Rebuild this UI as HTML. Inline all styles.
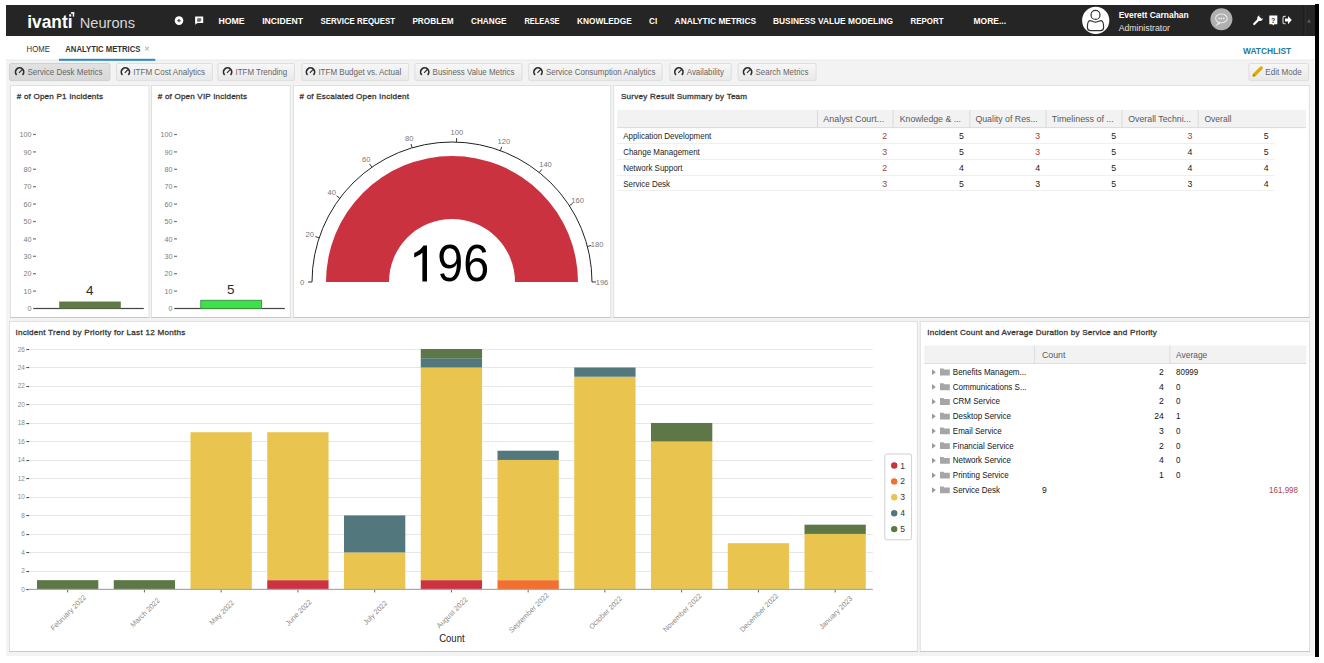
<!DOCTYPE html>
<html><head><meta charset="utf-8"><title>Analytic Metrics</title>
<style>
html,body{margin:0;padding:0;background:#fff;}
body{width:1324px;height:663px;overflow:hidden;font-family:"Liberation Sans", sans-serif;}
svg{display:block;}
text{font-family:"Liberation Sans", sans-serif;}
</style></head><body>
<svg width="1324" height="663" viewBox="0 0 1324 663">
<rect x="6" y="36" width="1308" height="24" fill="#ffffff" />
<rect x="6" y="60" width="1308" height="596" fill="#f3f3f3" />
<rect x="6" y="59.5" width="1308" height="1" fill="#e9e9e9" />
<rect x="6" y="5" width="1309" height="31" fill="#252525" />
<rect x="1315" y="4" width="4" height="653" fill="#000" />
<text x="27.3" y="27.9" font-size="18.3" fill="#fff" font-weight="bold" textLength="45.2" lengthAdjust="spacingAndGlyphs" >ivantı</text>
<rect x="70.9" y="12.2" width="3.3" height="1.5" fill="#fff"/><rect x="72.7" y="12.2" width="1.5" height="4.4" fill="#fff"/><rect x="69.2" y="14.3" width="2" height="2.3" fill="#fff"/>
<text x="79.7" y="27.7" font-size="14.6" fill="#d6d6d6" textLength="55.4" lengthAdjust="spacingAndGlyphs" >Neurons</text>
<circle cx="179" cy="20.6" r="4.3" fill="#fff"/><path d="M177.3 20.6h3.4M179 18.9v3.4" stroke="#555" stroke-width="1.3"/>
<path d="M195.1 16.5h8.1v6.5h-5.6l-2.3 1.8v-1.8h-0.2z" fill="#fff"/><path d="M197.2 18.3h4v2.3l-1.2 1.2h-2.8z" fill="#6a6a6a"/>
<text x="218.5" y="24" font-size="9" fill="#fff" font-weight="bold" textLength="26.2" lengthAdjust="spacingAndGlyphs" >HOME</text>
<text x="262.2" y="24" font-size="9" fill="#fff" font-weight="bold" textLength="40.8" lengthAdjust="spacingAndGlyphs" >INCIDENT</text>
<text x="320.5" y="24" font-size="9" fill="#fff" font-weight="bold" textLength="74.5" lengthAdjust="spacingAndGlyphs" >SERVICE REQUEST</text>
<text x="412.4" y="24" font-size="9" fill="#fff" font-weight="bold" textLength="41.1" lengthAdjust="spacingAndGlyphs" >PROBLEM</text>
<text x="471" y="24" font-size="9" fill="#fff" font-weight="bold" textLength="35.5" lengthAdjust="spacingAndGlyphs" >CHANGE</text>
<text x="524.4" y="24" font-size="9" fill="#fff" font-weight="bold" textLength="35.2" lengthAdjust="spacingAndGlyphs" >RELEASE</text>
<text x="577" y="24" font-size="9" fill="#fff" font-weight="bold" textLength="54.7" lengthAdjust="spacingAndGlyphs" >KNOWLEDGE</text>
<text x="649" y="24" font-size="9" fill="#fff" font-weight="bold" textLength="8.2" lengthAdjust="spacingAndGlyphs" >CI</text>
<text x="674.6" y="24" font-size="9" fill="#fff" font-weight="bold" textLength="81.4" lengthAdjust="spacingAndGlyphs" >ANALYTIC METRICS</text>
<text x="773" y="24" font-size="9" fill="#fff" font-weight="bold" textLength="120" lengthAdjust="spacingAndGlyphs" >BUSINESS VALUE MODELING</text>
<text x="910.5" y="24" font-size="9" fill="#fff" font-weight="bold" textLength="33.0" lengthAdjust="spacingAndGlyphs" >REPORT</text>
<text x="973.5" y="24" font-size="9" fill="#fff" font-weight="bold" textLength="32.5" lengthAdjust="spacingAndGlyphs" >MORE...</text>
<circle cx="1095.7" cy="20.4" r="13.6" fill="#fff"/>
<circle cx="1095.5" cy="14.9" r="4.5" fill="none" stroke="#333" stroke-width="1.2"/>
<path d="M1095.5 22.2C1093.5 22.2 1091.5 20.6 1090 20.6C1088.2 20.6 1087.4 24 1087.4 27.6C1087.4 29.6 1088.4 30.6 1090.4 30.6H1100.6C1102.6 30.6 1103.6 29.6 1103.6 27.6C1103.6 24 1102.8 20.6 1101 20.6C1099.5 20.6 1097.5 22.2 1095.5 22.2Z" fill="none" stroke="#333" stroke-width="1.2"/>
<text x="1118.7" y="17.9" font-size="8.5" fill="#fff" font-weight="bold" textLength="70" lengthAdjust="spacingAndGlyphs" >Everett Carnahan</text>
<text x="1118.7" y="31" font-size="8.5" fill="#e0e0e0" textLength="51.3" lengthAdjust="spacingAndGlyphs" >Administrator</text>
<circle cx="1221.4" cy="19.2" r="11" fill="#b0b0b0"/>
<ellipse cx="1221.4" cy="18.4" rx="5.8" ry="4.4" fill="none" stroke="#e8e8e8" stroke-width="1.1"/><path d="M1218.6 22.2l-1.6 2.6 3.2-1.8" fill="none" stroke="#e8e8e8" stroke-width="1.1"/>
<circle cx="1219.1" cy="18.4" r="0.9" fill="#ececec"/><circle cx="1221.4" cy="18.4" r="0.9" fill="#ececec"/><circle cx="1223.7" cy="18.4" r="0.9" fill="#ececec"/>
<path d="M1254.2 24l5.4-5.4" stroke="#fff" stroke-width="2.2" stroke-linecap="round"/><circle cx="1260" cy="18.2" r="2.7" fill="#fff"/><path d="M1260.6 14.6l2.8 2.8-1.6 1.6-2.8-2.8z" fill="#252525"/>
<path d="M1269.3 15.6h8v8.6h-3l-1 1.2-1-1.2h-3z" fill="#fff"/>
<text x="1273.1" y="22.6" font-size="7" fill="#333" font-weight="bold" text-anchor="middle" >?</text>
<path d="M1285.6 16.4h-1.2c-0.8 0-1.4 0.6-1.4 1.4v4.6c0 0.8 0.6 1.4 1.4 1.4h1.2" fill="none" stroke="#d8d8d8" stroke-width="1.1"/><path d="M1285 18.6h3v-2.6l3.8 4.1-3.8 4.1v-2.6h-3z" fill="#fff"/>
<rect x="1303.6" y="5" width="1" height="31" fill="#151515" />
<rect x="1304.6" y="5" width="0.8" height="31" fill="#3a3a3a" />
<path d="M1306.8 22.6l2.2-3.6 2.2 3.6z" fill="#5a5a5a"/>
<text x="26.6" y="52" font-size="8.6" fill="#333" textLength="23.2" lengthAdjust="spacingAndGlyphs" >HOME</text>
<text x="65.3" y="52" font-size="8.6" fill="#333" font-weight="bold" textLength="75.2" lengthAdjust="spacingAndGlyphs" >ANALYTIC METRICS</text>
<path d="M145.2 46.8l3.6 3.6M148.8 46.8l-3.6 3.6" stroke="#bdbdbd" stroke-width="1.1"/>
<rect x="59" y="58.8" width="96.3" height="2" fill="#2a8ac0" />
<text x="1243" y="54.3" font-size="8.7" fill="#2379a0" font-weight="bold" textLength="48.2" lengthAdjust="spacingAndGlyphs" >WATCHLIST</text>
<defs><linearGradient id="bg1" x1="0" y1="0" x2="0" y2="1"><stop offset="0" stop-color="#f7f7f7"/><stop offset="1" stop-color="#e9e9e9"/></linearGradient><linearGradient id="bg2" x1="0" y1="0" x2="0" y2="1"><stop offset="0" stop-color="#e2e2e2"/><stop offset="1" stop-color="#d8d8d8"/></linearGradient></defs>
<rect x="9.6" y="63.5" width="100.3" height="17.1" rx="1.5" fill="url(#bg2)" stroke="#d0d0d0" stroke-width="1"/>
<path d="M16.70 74.90A4.1 4.1 0 1 1 22.50 74.90" fill="none" stroke="#2d2d2d" stroke-width="1.7"/><path d="M19.00 72.90L22.10 69.70" stroke="#2d2d2d" stroke-width="1.2"/>
<text x="27.5" y="74.6" font-size="8.7" fill="#666" textLength="75.1" lengthAdjust="spacingAndGlyphs" >Service Desk Metrics</text>
<rect x="116.5" y="63.5" width="95.8" height="17.1" rx="1.5" fill="url(#bg1)" stroke="#dedede" stroke-width="1"/>
<path d="M122.50 74.90A4.1 4.1 0 1 1 128.30 74.90" fill="none" stroke="#2d2d2d" stroke-width="1.7"/><path d="M124.80 72.90L127.90 69.70" stroke="#2d2d2d" stroke-width="1.2"/>
<text x="133.3" y="74.6" font-size="8.7" fill="#666" textLength="71.8" lengthAdjust="spacingAndGlyphs" >ITFM Cost Analytics</text>
<rect x="217.8" y="63.5" width="76.7" height="17.1" rx="1.5" fill="url(#bg1)" stroke="#dedede" stroke-width="1"/>
<path d="M224.70 74.90A4.1 4.1 0 1 1 230.50 74.90" fill="none" stroke="#2d2d2d" stroke-width="1.7"/><path d="M227.00 72.90L230.10 69.70" stroke="#2d2d2d" stroke-width="1.2"/>
<text x="235.5" y="74.6" font-size="8.7" fill="#666" textLength="51.7" lengthAdjust="spacingAndGlyphs" >ITFM Trending</text>
<rect x="301.8" y="63.5" width="106.9" height="17.1" rx="1.5" fill="url(#bg1)" stroke="#dedede" stroke-width="1"/>
<path d="M307.60 74.90A4.1 4.1 0 1 1 313.40 74.90" fill="none" stroke="#2d2d2d" stroke-width="1.7"/><path d="M309.90 72.90L313.00 69.70" stroke="#2d2d2d" stroke-width="1.2"/>
<text x="318.40000000000003" y="74.6" font-size="8.7" fill="#666" textLength="82.8" lengthAdjust="spacingAndGlyphs" >ITFM Budget vs. Actual</text>
<rect x="414.8" y="63.5" width="107.2" height="17.1" rx="1.5" fill="url(#bg1)" stroke="#dedede" stroke-width="1"/>
<path d="M421.80 74.90A4.1 4.1 0 1 1 427.60 74.90" fill="none" stroke="#2d2d2d" stroke-width="1.7"/><path d="M424.10 72.90L427.20 69.70" stroke="#2d2d2d" stroke-width="1.2"/>
<text x="432.6" y="74.6" font-size="8.7" fill="#666" textLength="81.9" lengthAdjust="spacingAndGlyphs" >Business Value Metrics</text>
<rect x="528.7" y="63.5" width="133.3" height="17.1" rx="1.5" fill="url(#bg1)" stroke="#dedede" stroke-width="1"/>
<path d="M535.10 74.90A4.1 4.1 0 1 1 540.90 74.90" fill="none" stroke="#2d2d2d" stroke-width="1.7"/><path d="M537.40 72.90L540.50 69.70" stroke="#2d2d2d" stroke-width="1.2"/>
<text x="545.9" y="74.6" font-size="8.7" fill="#666" textLength="109.6" lengthAdjust="spacingAndGlyphs" >Service Consumption Analytics</text>
<rect x="669.8" y="63.5" width="61.4" height="17.1" rx="1.5" fill="url(#bg1)" stroke="#dedede" stroke-width="1"/>
<path d="M676.00 74.90A4.1 4.1 0 1 1 681.80 74.90" fill="none" stroke="#2d2d2d" stroke-width="1.7"/><path d="M678.30 72.90L681.40 69.70" stroke="#2d2d2d" stroke-width="1.2"/>
<text x="686.8" y="74.6" font-size="8.7" fill="#666" textLength="37.1" lengthAdjust="spacingAndGlyphs" >Availability</text>
<rect x="738.1" y="63.5" width="78.0" height="17.1" rx="1.5" fill="url(#bg1)" stroke="#dedede" stroke-width="1"/>
<path d="M744.70 74.90A4.1 4.1 0 1 1 750.50 74.90" fill="none" stroke="#2d2d2d" stroke-width="1.7"/><path d="M747.00 72.90L750.10 69.70" stroke="#2d2d2d" stroke-width="1.2"/>
<text x="755.5" y="74.6" font-size="8.7" fill="#666" textLength="53.0" lengthAdjust="spacingAndGlyphs" >Search Metrics</text>
<rect x="1248.9" y="63.5" width="59.5" height="17.1" rx="1.5" fill="url(#bg1)" stroke="#dedede"/>
<path d="M1254 75.2L1261.2 68" stroke="#dcaa10" stroke-width="3.3" stroke-linecap="round"/><path d="M1253 76.4l0.6-2.2 1.6 1.6z" fill="#a07a10"/>
<text x="1265.3" y="74.6" font-size="8.7" fill="#666" textLength="36.4" lengthAdjust="spacingAndGlyphs" >Edit Mode</text>
<rect x="10.5" y="85.5" width="138.5" height="232" fill="#fff" stroke="#e0e0e0" stroke-width="1"/>
<rect x="10" y="317" width="139.5" height="1" fill="#c9c9c9"/>
<rect x="151.5" y="85.5" width="138.8" height="232" fill="#fff" stroke="#e0e0e0" stroke-width="1"/>
<rect x="151" y="317" width="139.8" height="1" fill="#c9c9c9"/>
<rect x="293.5" y="85.5" width="317.2" height="232" fill="#fff" stroke="#e0e0e0" stroke-width="1"/>
<rect x="293" y="317" width="318.2" height="1" fill="#c9c9c9"/>
<rect x="613.7" y="85.5" width="695.6" height="232" fill="#fff" stroke="#e0e0e0" stroke-width="1"/>
<rect x="613.2" y="317" width="696.6" height="1" fill="#c9c9c9"/>
<rect x="9.5" y="321.5" width="907.8" height="330" fill="#fff" stroke="#e0e0e0" stroke-width="1"/>
<rect x="9" y="651" width="908.8" height="1" fill="#c9c9c9"/>
<rect x="920.3" y="321.5" width="389.2" height="330" fill="#fff" stroke="#e0e0e0" stroke-width="1"/>
<rect x="919.8" y="651" width="390.2" height="1" fill="#c9c9c9"/>
<text x="16.8" y="98.9" font-size="8.1" fill="#383838" stroke="#383838" stroke-width="0.3" textLength="86.2" lengthAdjust="spacing"># of Open P1 Incidents</text>
<text x="157.8" y="98.9" font-size="8.1" fill="#383838" stroke="#383838" stroke-width="0.3" textLength="89.2" lengthAdjust="spacing"># of Open VIP Incidents</text>
<text x="299.5" y="98.9" font-size="8.1" fill="#383838" stroke="#383838" stroke-width="0.3" textLength="109.4" lengthAdjust="spacing"># of Escalated Open Incident</text>
<text x="621" y="99" font-size="8.1" fill="#383838" stroke="#383838" stroke-width="0.3" textLength="126.1" lengthAdjust="spacing">Survey Result Summary by Team</text>
<text x="31.6" y="311.1" font-size="8" fill="#7c7c7c" text-anchor="end" textLength="4.0" lengthAdjust="spacingAndGlyphs" >0</text>
<text x="31.6" y="293.70000000000005" font-size="8" fill="#7c7c7c" text-anchor="end" textLength="8.01" lengthAdjust="spacingAndGlyphs" >10</text>
<rect x="33" y="290.50" width="3" height="1.2" fill="#777"/>
<text x="31.6" y="276.3" font-size="8" fill="#7c7c7c" text-anchor="end" textLength="8.01" lengthAdjust="spacingAndGlyphs" >20</text>
<rect x="33" y="273.10" width="3" height="1.2" fill="#777"/>
<text x="31.6" y="258.90000000000003" font-size="8" fill="#7c7c7c" text-anchor="end" textLength="8.01" lengthAdjust="spacingAndGlyphs" >30</text>
<rect x="33" y="255.70" width="3" height="1.2" fill="#777"/>
<text x="31.6" y="241.5" font-size="8" fill="#7c7c7c" text-anchor="end" textLength="8.01" lengthAdjust="spacingAndGlyphs" >40</text>
<rect x="33" y="238.30" width="3" height="1.2" fill="#777"/>
<text x="31.6" y="224.1" font-size="8" fill="#7c7c7c" text-anchor="end" textLength="8.01" lengthAdjust="spacingAndGlyphs" >50</text>
<rect x="33" y="220.90" width="3" height="1.2" fill="#777"/>
<text x="31.6" y="206.70000000000002" font-size="8" fill="#7c7c7c" text-anchor="end" textLength="8.01" lengthAdjust="spacingAndGlyphs" >60</text>
<rect x="33" y="203.50" width="3" height="1.2" fill="#777"/>
<text x="31.6" y="189.3" font-size="8" fill="#7c7c7c" text-anchor="end" textLength="8.01" lengthAdjust="spacingAndGlyphs" >70</text>
<rect x="33" y="186.10" width="3" height="1.2" fill="#777"/>
<text x="31.6" y="171.9" font-size="8" fill="#7c7c7c" text-anchor="end" textLength="8.01" lengthAdjust="spacingAndGlyphs" >80</text>
<rect x="33" y="168.70" width="3" height="1.2" fill="#777"/>
<text x="31.6" y="154.5" font-size="8" fill="#7c7c7c" text-anchor="end" textLength="8.01" lengthAdjust="spacingAndGlyphs" >90</text>
<rect x="33" y="151.30" width="3" height="1.2" fill="#777"/>
<text x="31.6" y="137.1" font-size="8" fill="#7c7c7c" text-anchor="end" textLength="12.01" lengthAdjust="spacingAndGlyphs" >100</text>
<rect x="33" y="133.90" width="3" height="1.2" fill="#777"/>
<rect x="33.3" y="307.9" width="110.5" height="1.2" fill="#444"/>
<rect x="59.2" y="301.54" width="61.6" height="6.96" fill="#5e7a46"/>
<text x="89.8" y="295.34000000000003" font-size="13.5" fill="#2a2a2a" text-anchor="middle" >4</text>
<text x="172.6" y="311.1" font-size="8" fill="#7c7c7c" text-anchor="end" textLength="4.0" lengthAdjust="spacingAndGlyphs" >0</text>
<text x="172.6" y="293.70000000000005" font-size="8" fill="#7c7c7c" text-anchor="end" textLength="8.01" lengthAdjust="spacingAndGlyphs" >10</text>
<rect x="174" y="290.50" width="3" height="1.2" fill="#777"/>
<text x="172.6" y="276.3" font-size="8" fill="#7c7c7c" text-anchor="end" textLength="8.01" lengthAdjust="spacingAndGlyphs" >20</text>
<rect x="174" y="273.10" width="3" height="1.2" fill="#777"/>
<text x="172.6" y="258.90000000000003" font-size="8" fill="#7c7c7c" text-anchor="end" textLength="8.01" lengthAdjust="spacingAndGlyphs" >30</text>
<rect x="174" y="255.70" width="3" height="1.2" fill="#777"/>
<text x="172.6" y="241.5" font-size="8" fill="#7c7c7c" text-anchor="end" textLength="8.01" lengthAdjust="spacingAndGlyphs" >40</text>
<rect x="174" y="238.30" width="3" height="1.2" fill="#777"/>
<text x="172.6" y="224.1" font-size="8" fill="#7c7c7c" text-anchor="end" textLength="8.01" lengthAdjust="spacingAndGlyphs" >50</text>
<rect x="174" y="220.90" width="3" height="1.2" fill="#777"/>
<text x="172.6" y="206.70000000000002" font-size="8" fill="#7c7c7c" text-anchor="end" textLength="8.01" lengthAdjust="spacingAndGlyphs" >60</text>
<rect x="174" y="203.50" width="3" height="1.2" fill="#777"/>
<text x="172.6" y="189.3" font-size="8" fill="#7c7c7c" text-anchor="end" textLength="8.01" lengthAdjust="spacingAndGlyphs" >70</text>
<rect x="174" y="186.10" width="3" height="1.2" fill="#777"/>
<text x="172.6" y="171.9" font-size="8" fill="#7c7c7c" text-anchor="end" textLength="8.01" lengthAdjust="spacingAndGlyphs" >80</text>
<rect x="174" y="168.70" width="3" height="1.2" fill="#777"/>
<text x="172.6" y="154.5" font-size="8" fill="#7c7c7c" text-anchor="end" textLength="8.01" lengthAdjust="spacingAndGlyphs" >90</text>
<rect x="174" y="151.30" width="3" height="1.2" fill="#777"/>
<text x="172.6" y="137.1" font-size="8" fill="#7c7c7c" text-anchor="end" textLength="12.01" lengthAdjust="spacingAndGlyphs" >100</text>
<rect x="174" y="133.90" width="3" height="1.2" fill="#777"/>
<rect x="174.3" y="307.9" width="110.5" height="1.2" fill="#444"/>
<rect x="200.8" y="300.30" width="60.8" height="8.20" fill="#3be24b" stroke="#3a8c3c" stroke-width="0.9"/>
<text x="230.8" y="293.6" font-size="13.5" fill="#2a2a2a" text-anchor="middle" >5</text>
<path d="M312 282A140 140 0 0 1 592 282" fill="none" stroke="#222" stroke-width="1"/>
<path d="M326 282A126 126 0 0 1 578 282L515 282A63 63 0 0 0 389 282z" fill="#cb3240"/>
<path d="M312.00 282.00L308.00 282.00" stroke="#222" stroke-width="0.9"/>
<text x="302.0" y="284.7" font-size="7.6" fill="#777" text-anchor="middle" >0</text>
<path d="M319.13 237.88L315.34 236.62" stroke="#222" stroke-width="0.9"/>
<text x="309.64" y="237.43" font-size="7.6" fill="#777" text-anchor="middle" >20</text>
<path d="M339.80 198.26L336.60 195.87" stroke="#222" stroke-width="0.9"/>
<text x="331.79" y="194.98" font-size="7.6" fill="#777" text-anchor="middle" >40</text>
<path d="M371.90 167.18L369.62 163.90" stroke="#222" stroke-width="0.9"/>
<text x="366.18" y="161.67" font-size="7.6" fill="#777" text-anchor="middle" >60</text>
<path d="M412.17 147.79L411.03 143.95" stroke="#222" stroke-width="0.9"/>
<text x="409.32" y="140.9" font-size="7.6" fill="#777" text-anchor="middle" >80</text>
<path d="M456.49 142.07L456.62 138.07" stroke="#222" stroke-width="0.9"/>
<text x="456.81" y="134.78" font-size="7.6" fill="#777" text-anchor="middle" >100</text>
<path d="M500.35 150.61L501.73 146.86" stroke="#222" stroke-width="0.9"/>
<text x="503.8" y="143.93" font-size="7.6" fill="#777" text-anchor="middle" >120</text>
<path d="M539.29 172.54L541.78 169.42" stroke="#222" stroke-width="0.9"/>
<text x="545.52" y="167.43" font-size="7.6" fill="#777" text-anchor="middle" >140</text>
<path d="M569.33 205.63L572.68 203.44" stroke="#222" stroke-width="0.9"/>
<text x="577.71" y="202.87" font-size="7.6" fill="#777" text-anchor="middle" >160</text>
<path d="M587.42 246.49L591.29 245.47" stroke="#222" stroke-width="0.9"/>
<text x="597.09" y="246.65" font-size="7.6" fill="#777" text-anchor="middle" >180</text>
<path d="M592.00 282.00L596.00 282.00" stroke="#222" stroke-width="0.9"/>
<text x="602.0" y="284.7" font-size="7.6" fill="#777" text-anchor="middle" >196</text>
<path d="M427 245.4V281.6H422.4V252.4C420.6 254.3 417.6 256.2 414.2 257.4V253C418.6 251.2 421.8 248.2 423.6 245.4Z" fill="#000"/>
<text x="437.3" y="281.3" font-size="52" fill="#000" textLength="51.8" lengthAdjust="spacingAndGlyphs" >96</text>
<rect x="617.2" y="110" width="688.8" height="17.6" fill="#f2f2f2" />
<rect x="617.2" y="127.2" width="688.8" height="0.9" fill="#d6d6d6" />
<rect x="817" y="110" width="0.9" height="17.3" fill="#d6d6d6" />
<text x="823.3000000000001" y="121.6" font-size="9" fill="#5a5a5a" textLength="60.9" lengthAdjust="spacingAndGlyphs" >Analyst Court...</text>
<rect x="892.6" y="110" width="0.9" height="17.3" fill="#d6d6d6" />
<text x="899.7" y="121.6" font-size="9" fill="#5a5a5a" textLength="61.3" lengthAdjust="spacingAndGlyphs" >Knowledge &amp; ...</text>
<rect x="969.4" y="110" width="0.9" height="17.3" fill="#d6d6d6" />
<text x="975.4000000000001" y="121.6" font-size="9" fill="#5a5a5a" textLength="62.3" lengthAdjust="spacingAndGlyphs" >Quality of Res...</text>
<rect x="1045.5" y="110" width="0.9" height="17.3" fill="#d6d6d6" />
<text x="1051.8" y="121.6" font-size="9" fill="#5a5a5a" textLength="62.0" lengthAdjust="spacingAndGlyphs" >Timeliness of ...</text>
<rect x="1121.6" y="110" width="0.9" height="17.3" fill="#d6d6d6" />
<text x="1128.3" y="121.6" font-size="9" fill="#5a5a5a" textLength="62.6" lengthAdjust="spacingAndGlyphs" >Overall Techni...</text>
<rect x="1197.7" y="110" width="0.9" height="17.3" fill="#d6d6d6" />
<text x="1204.4" y="121.6" font-size="9" fill="#5a5a5a" textLength="27.1" lengthAdjust="spacingAndGlyphs" >Overall</text>
<text x="623.2" y="139.24999999999997" font-size="8.8" fill="#1e1e1e" textLength="88.1" lengthAdjust="spacingAndGlyphs" >Application Development</text>
<text x="887.2" y="139.24999999999997" font-size="8.8" fill="#a83c40" text-anchor="end" >2</text>
<text x="964.0" y="139.24999999999997" font-size="8.8" fill="#1e1e1e" text-anchor="end" >5</text>
<text x="1040.1" y="139.24999999999997" font-size="8.8" fill="#a83c40" text-anchor="end" >3</text>
<text x="1116.1999999999998" y="139.24999999999997" font-size="8.8" fill="#1e1e1e" text-anchor="end" >5</text>
<text x="1192.3" y="139.24999999999997" font-size="8.8" fill="#a83c40" text-anchor="end" >3</text>
<text x="1268.6" y="139.24999999999997" font-size="8.8" fill="#1e1e1e" text-anchor="end" >5</text>
<rect x="617.2" y="143.2" width="656.8" height="0.8" fill="#ebebeb" />
<text x="623.2" y="155.24999999999997" font-size="8.8" fill="#1e1e1e" textLength="76.6" lengthAdjust="spacingAndGlyphs" >Change Management</text>
<text x="887.2" y="155.24999999999997" font-size="8.8" fill="#a83c40" text-anchor="end" >3</text>
<text x="964.0" y="155.24999999999997" font-size="8.8" fill="#1e1e1e" text-anchor="end" >5</text>
<text x="1040.1" y="155.24999999999997" font-size="8.8" fill="#a83c40" text-anchor="end" >3</text>
<text x="1116.1999999999998" y="155.24999999999997" font-size="8.8" fill="#1e1e1e" text-anchor="end" >5</text>
<text x="1192.3" y="155.24999999999997" font-size="8.8" fill="#1e1e1e" text-anchor="end" >4</text>
<text x="1268.6" y="155.24999999999997" font-size="8.8" fill="#1e1e1e" text-anchor="end" >5</text>
<rect x="617.2" y="159.1" width="656.8" height="0.8" fill="#ebebeb" />
<text x="623.2" y="171.15" font-size="8.8" fill="#1e1e1e" textLength="59.3" lengthAdjust="spacingAndGlyphs" >Network Support</text>
<text x="887.2" y="171.15" font-size="8.8" fill="#a83c40" text-anchor="end" >2</text>
<text x="964.0" y="171.15" font-size="8.8" fill="#1e1e1e" text-anchor="end" >4</text>
<text x="1040.1" y="171.15" font-size="8.8" fill="#1e1e1e" text-anchor="end" >4</text>
<text x="1116.1999999999998" y="171.15" font-size="8.8" fill="#1e1e1e" text-anchor="end" >5</text>
<text x="1192.3" y="171.15" font-size="8.8" fill="#1e1e1e" text-anchor="end" >4</text>
<text x="1268.6" y="171.15" font-size="8.8" fill="#1e1e1e" text-anchor="end" >4</text>
<rect x="617.2" y="175.0" width="656.8" height="0.8" fill="#ebebeb" />
<text x="623.2" y="186.6" font-size="8.8" fill="#1e1e1e" textLength="46.9" lengthAdjust="spacingAndGlyphs" >Service Desk</text>
<text x="887.2" y="186.6" font-size="8.8" fill="#a83c40" text-anchor="end" >3</text>
<text x="964.0" y="186.6" font-size="8.8" fill="#1e1e1e" text-anchor="end" >5</text>
<text x="1040.1" y="186.6" font-size="8.8" fill="#1e1e1e" text-anchor="end" >3</text>
<text x="1116.1999999999998" y="186.6" font-size="8.8" fill="#1e1e1e" text-anchor="end" >5</text>
<text x="1192.3" y="186.6" font-size="8.8" fill="#1e1e1e" text-anchor="end" >3</text>
<text x="1268.6" y="186.6" font-size="8.8" fill="#1e1e1e" text-anchor="end" >4</text>
<rect x="617.2" y="190.0" width="656.8" height="0.8" fill="#ebebeb" />
<text x="15.4" y="334.8" font-size="8.1" fill="#383838" stroke="#383838" stroke-width="0.3" textLength="169.8" lengthAdjust="spacing">Incident Trend by Priority for Last 12 Months</text>
<text x="24.9" y="591.9" font-size="7" fill="#8a8a8a" text-anchor="end" textLength="3.58" lengthAdjust="spacingAndGlyphs" >0</text>
<rect x="26.3" y="589" width="2.9" height="1.1" fill="#555" />
<rect x="29.4" y="571" width="843.4" height="1" fill="#e6e6e6" />
<text x="24.9" y="573.4076923076923" font-size="7" fill="#8a8a8a" text-anchor="end" textLength="3.58" lengthAdjust="spacingAndGlyphs" >2</text>
<rect x="26.3" y="571" width="2.9" height="1.1" fill="#555" />
<rect x="29.4" y="552" width="843.4" height="1" fill="#e6e6e6" />
<text x="24.9" y="554.9153846153846" font-size="7" fill="#8a8a8a" text-anchor="end" textLength="3.58" lengthAdjust="spacingAndGlyphs" >4</text>
<rect x="26.3" y="552" width="2.9" height="1.1" fill="#555" />
<rect x="29.4" y="534" width="843.4" height="1" fill="#e6e6e6" />
<text x="24.9" y="536.4230769230769" font-size="7" fill="#8a8a8a" text-anchor="end" textLength="3.58" lengthAdjust="spacingAndGlyphs" >6</text>
<rect x="26.3" y="534" width="2.9" height="1.1" fill="#555" />
<rect x="29.4" y="515" width="843.4" height="1" fill="#e6e6e6" />
<text x="24.9" y="517.9307692307692" font-size="7" fill="#8a8a8a" text-anchor="end" textLength="3.58" lengthAdjust="spacingAndGlyphs" >8</text>
<rect x="26.3" y="515" width="2.9" height="1.1" fill="#555" />
<rect x="29.4" y="497" width="843.4" height="1" fill="#e6e6e6" />
<text x="24.9" y="499.4384615384615" font-size="7" fill="#8a8a8a" text-anchor="end" textLength="7.16" lengthAdjust="spacingAndGlyphs" >10</text>
<rect x="26.3" y="497" width="2.9" height="1.1" fill="#555" />
<rect x="29.4" y="478" width="843.4" height="1" fill="#e6e6e6" />
<text x="24.9" y="480.94615384615383" font-size="7" fill="#8a8a8a" text-anchor="end" textLength="7.16" lengthAdjust="spacingAndGlyphs" >12</text>
<rect x="26.3" y="478" width="2.9" height="1.1" fill="#555" />
<rect x="29.4" y="460" width="843.4" height="1" fill="#e6e6e6" />
<text x="24.9" y="462.45384615384614" font-size="7" fill="#8a8a8a" text-anchor="end" textLength="7.16" lengthAdjust="spacingAndGlyphs" >14</text>
<rect x="26.3" y="460" width="2.9" height="1.1" fill="#555" />
<rect x="29.4" y="441" width="843.4" height="1" fill="#e6e6e6" />
<text x="24.9" y="443.96153846153845" font-size="7" fill="#8a8a8a" text-anchor="end" textLength="7.16" lengthAdjust="spacingAndGlyphs" >16</text>
<rect x="26.3" y="441" width="2.9" height="1.1" fill="#555" />
<rect x="29.4" y="423" width="843.4" height="1" fill="#e6e6e6" />
<text x="24.9" y="425.46923076923076" font-size="7" fill="#8a8a8a" text-anchor="end" textLength="7.16" lengthAdjust="spacingAndGlyphs" >18</text>
<rect x="26.3" y="423" width="2.9" height="1.1" fill="#555" />
<rect x="29.4" y="404" width="843.4" height="1" fill="#e6e6e6" />
<text x="24.9" y="406.9769230769231" font-size="7" fill="#8a8a8a" text-anchor="end" textLength="7.16" lengthAdjust="spacingAndGlyphs" >20</text>
<rect x="26.3" y="404" width="2.9" height="1.1" fill="#555" />
<rect x="29.4" y="386" width="843.4" height="1" fill="#e6e6e6" />
<text x="24.9" y="388.4846153846154" font-size="7" fill="#8a8a8a" text-anchor="end" textLength="7.16" lengthAdjust="spacingAndGlyphs" >22</text>
<rect x="26.3" y="386" width="2.9" height="1.1" fill="#555" />
<rect x="29.4" y="367" width="843.4" height="1" fill="#e6e6e6" />
<text x="24.9" y="369.9923076923077" font-size="7" fill="#8a8a8a" text-anchor="end" textLength="7.16" lengthAdjust="spacingAndGlyphs" >24</text>
<rect x="26.3" y="367" width="2.9" height="1.1" fill="#555" />
<rect x="29.4" y="349" width="843.4" height="1" fill="#e6e6e6" />
<text x="24.9" y="351.5" font-size="7" fill="#8a8a8a" text-anchor="end" textLength="7.16" lengthAdjust="spacingAndGlyphs" >26</text>
<rect x="26.3" y="349" width="2.9" height="1.1" fill="#555" />
<rect x="37.00" y="580.15" width="61.3" height="9.25" fill="#5d7747"/>
<rect x="67.15" y="589.4" width="1" height="3" fill="#666" />
<text x="68.35" y="615.10" font-size="7.2" fill="#8a8a8a" text-anchor="middle" transform="rotate(-45 68.35 612.70)">February 2022</text>
<rect x="113.75" y="580.15" width="61.3" height="9.25" fill="#5d7747"/>
<rect x="143.9" y="589.4" width="1" height="3" fill="#666" />
<text x="145.10" y="615.10" font-size="7.2" fill="#8a8a8a" text-anchor="middle" transform="rotate(-45 145.10 612.70)">March 2022</text>
<rect x="190.50" y="432.22" width="61.3" height="157.18" fill="#e9c550"/>
<rect x="220.65" y="589.4" width="1" height="3" fill="#666" />
<text x="221.85" y="615.10" font-size="7.2" fill="#8a8a8a" text-anchor="middle" transform="rotate(-45 221.85 612.70)">May 2022</text>
<rect x="267.25" y="580.15" width="61.3" height="9.25" fill="#cc3340"/>
<rect x="267.25" y="432.22" width="61.3" height="147.94" fill="#e9c550"/>
<rect x="297.4" y="589.4" width="1" height="3" fill="#666" />
<text x="298.60" y="615.10" font-size="7.2" fill="#8a8a8a" text-anchor="middle" transform="rotate(-45 298.60 612.70)">June 2022</text>
<rect x="344.00" y="552.42" width="61.3" height="36.98" fill="#e9c550"/>
<rect x="344.00" y="515.43" width="61.3" height="36.98" fill="#52787e"/>
<rect x="374.15" y="589.4" width="1" height="3" fill="#666" />
<text x="375.35" y="615.10" font-size="7.2" fill="#8a8a8a" text-anchor="middle" transform="rotate(-45 375.35 612.70)">July 2022</text>
<rect x="420.75" y="580.15" width="61.3" height="9.25" fill="#cc3340"/>
<rect x="420.75" y="367.49" width="61.3" height="212.66" fill="#e9c550"/>
<rect x="420.75" y="358.25" width="61.3" height="9.25" fill="#52787e"/>
<rect x="420.75" y="349.00" width="61.3" height="9.25" fill="#5d7747"/>
<rect x="450.9" y="589.4" width="1" height="3" fill="#666" />
<text x="452.10" y="615.10" font-size="7.2" fill="#8a8a8a" text-anchor="middle" transform="rotate(-45 452.10 612.70)">August 2022</text>
<rect x="497.50" y="580.15" width="61.3" height="9.25" fill="#f26f30"/>
<rect x="497.50" y="459.95" width="61.3" height="120.20" fill="#e9c550"/>
<rect x="497.50" y="450.71" width="61.3" height="9.25" fill="#52787e"/>
<rect x="527.65" y="589.4" width="1" height="3" fill="#666" />
<text x="528.85" y="615.10" font-size="7.2" fill="#8a8a8a" text-anchor="middle" transform="rotate(-45 528.85 612.70)">September 2022</text>
<rect x="574.25" y="376.74" width="61.3" height="212.66" fill="#e9c550"/>
<rect x="574.25" y="367.49" width="61.3" height="9.25" fill="#52787e"/>
<rect x="604.4" y="589.4" width="1" height="3" fill="#666" />
<text x="605.60" y="615.10" font-size="7.2" fill="#8a8a8a" text-anchor="middle" transform="rotate(-45 605.60 612.70)">October 2022</text>
<rect x="651.00" y="441.46" width="61.3" height="147.94" fill="#e9c550"/>
<rect x="651.00" y="422.97" width="61.3" height="18.49" fill="#5d7747"/>
<rect x="681.15" y="589.4" width="1" height="3" fill="#666" />
<text x="682.35" y="615.10" font-size="7.2" fill="#8a8a8a" text-anchor="middle" transform="rotate(-45 682.35 612.70)">November 2022</text>
<rect x="727.75" y="543.17" width="61.3" height="46.23" fill="#e9c550"/>
<rect x="757.9" y="589.4" width="1" height="3" fill="#666" />
<text x="759.10" y="615.10" font-size="7.2" fill="#8a8a8a" text-anchor="middle" transform="rotate(-45 759.10 612.70)">December 2022</text>
<rect x="804.50" y="533.92" width="61.3" height="55.48" fill="#e9c550"/>
<rect x="804.50" y="524.68" width="61.3" height="9.25" fill="#5d7747"/>
<rect x="834.65" y="589.4" width="1" height="3" fill="#666" />
<text x="835.85" y="615.10" font-size="7.2" fill="#8a8a8a" text-anchor="middle" transform="rotate(-45 835.85 612.70)">January 2023</text>
<rect x="28.6" y="588.8" width="844.1999999999999" height="1.2" fill="#a8a8a8" />
<text x="439.2" y="641.7" font-size="10.4" fill="#222" textLength="25.4" lengthAdjust="spacingAndGlyphs" >Count</text>
<rect x="884.8" y="454" width="26.8" height="85.8" rx="2" fill="#fff" stroke="#cfcfcf" stroke-width="1"/>
<circle cx="894.2" cy="465.50" r="3.2" fill="#cc3340"/>
<text x="900.2" y="468.5" font-size="8.5" fill="#333" >1</text>
<circle cx="894.2" cy="481.40" r="3.2" fill="#f26f30"/>
<text x="900.2" y="484.4" font-size="8.5" fill="#333" >2</text>
<circle cx="894.2" cy="497.30" r="3.2" fill="#e9c550"/>
<text x="900.2" y="500.3" font-size="8.5" fill="#333" >3</text>
<circle cx="894.2" cy="513.20" r="3.2" fill="#52787e"/>
<text x="900.2" y="516.2" font-size="8.5" fill="#333" >4</text>
<circle cx="894.2" cy="529.10" r="3.2" fill="#5d7747"/>
<text x="900.2" y="532.1" font-size="8.5" fill="#333" >5</text>
<text x="927.2" y="334.8" font-size="8.1" fill="#383838" stroke="#383838" stroke-width="0.3" textLength="229.7" lengthAdjust="spacing">Incident Count and Average Duration by Service and Priority</text>
<rect x="924.2" y="345.5" width="382.29999999999995" height="18" fill="#f2f2f2" />
<rect x="924.2" y="363" width="382.29999999999995" height="0.8" fill="#d8d8d8" />
<rect x="1034.3" y="345.5" width="0.8" height="17.5" fill="#d8d8d8" />
<rect x="1169.5" y="345.5" width="0.8" height="17.5" fill="#d8d8d8" />
<text x="1042" y="357.8" font-size="9" fill="#5a5a5a" textLength="23.4" lengthAdjust="spacingAndGlyphs" >Count</text>
<text x="1176" y="357.8" font-size="9" fill="#5a5a5a" textLength="31.3" lengthAdjust="spacingAndGlyphs" >Average</text>
<path d="M932 369.30l3.8 2.85-3.8 2.85z" fill="#9a9a9a"/>
<path d="M940 368.50h3.4l0.8 1h5.6v5.9h-9.8z" fill="#a6a6a6"/>
<text x="952.8" y="375.0" font-size="8.6" fill="#151515" textLength="73.4" lengthAdjust="spacingAndGlyphs" >Benefits Managem...</text>
<text x="1163.9" y="375.0" font-size="8.6" fill="#151515" text-anchor="end" >2</text>
<text x="1176" y="375.0" font-size="8.6" fill="#151515" textLength="22.24" lengthAdjust="spacingAndGlyphs" >80999</text>
<path d="M932 384.04l3.8 2.85-3.8 2.85z" fill="#9a9a9a"/>
<path d="M940 383.24h3.4l0.8 1h5.6v5.9h-9.8z" fill="#a6a6a6"/>
<text x="952.8" y="389.74" font-size="8.6" fill="#151515" textLength="73.8" lengthAdjust="spacingAndGlyphs" >Communications S...</text>
<text x="1163.9" y="389.74" font-size="8.6" fill="#151515" text-anchor="end" >4</text>
<text x="1176" y="389.74" font-size="8.6" fill="#151515" textLength="4.45" lengthAdjust="spacingAndGlyphs" >0</text>
<path d="M932 398.78l3.8 2.85-3.8 2.85z" fill="#9a9a9a"/>
<path d="M940 397.98h3.4l0.8 1h5.6v5.9h-9.8z" fill="#a6a6a6"/>
<text x="952.8" y="404.48" font-size="8.6" fill="#151515" textLength="47.1" lengthAdjust="spacingAndGlyphs" >CRM Service</text>
<text x="1163.9" y="404.48" font-size="8.6" fill="#151515" text-anchor="end" >2</text>
<text x="1176" y="404.48" font-size="8.6" fill="#151515" textLength="4.45" lengthAdjust="spacingAndGlyphs" >0</text>
<path d="M932 413.52l3.8 2.85-3.8 2.85z" fill="#9a9a9a"/>
<path d="M940 412.72h3.4l0.8 1h5.6v5.9h-9.8z" fill="#a6a6a6"/>
<text x="952.8" y="419.22" font-size="8.6" fill="#151515" textLength="58.2" lengthAdjust="spacingAndGlyphs" >Desktop Service</text>
<text x="1163.9" y="419.22" font-size="8.6" fill="#151515" text-anchor="end" >24</text>
<text x="1176" y="419.22" font-size="8.6" fill="#151515" textLength="4.45" lengthAdjust="spacingAndGlyphs" >1</text>
<path d="M932 428.26l3.8 2.85-3.8 2.85z" fill="#9a9a9a"/>
<path d="M940 427.46h3.4l0.8 1h5.6v5.9h-9.8z" fill="#a6a6a6"/>
<text x="952.8" y="433.96" font-size="8.6" fill="#151515" textLength="48.9" lengthAdjust="spacingAndGlyphs" >Email Service</text>
<text x="1163.9" y="433.96" font-size="8.6" fill="#151515" text-anchor="end" >3</text>
<text x="1176" y="433.96" font-size="8.6" fill="#151515" textLength="4.45" lengthAdjust="spacingAndGlyphs" >0</text>
<path d="M932 443.00l3.8 2.85-3.8 2.85z" fill="#9a9a9a"/>
<path d="M940 442.20h3.4l0.8 1h5.6v5.9h-9.8z" fill="#a6a6a6"/>
<text x="952.8" y="448.7" font-size="8.6" fill="#151515" textLength="60.9" lengthAdjust="spacingAndGlyphs" >Financial Service</text>
<text x="1163.9" y="448.7" font-size="8.6" fill="#151515" text-anchor="end" >2</text>
<text x="1176" y="448.7" font-size="8.6" fill="#151515" textLength="4.45" lengthAdjust="spacingAndGlyphs" >0</text>
<path d="M932 457.74l3.8 2.85-3.8 2.85z" fill="#9a9a9a"/>
<path d="M940 456.94h3.4l0.8 1h5.6v5.9h-9.8z" fill="#a6a6a6"/>
<text x="952.8" y="463.44" font-size="8.6" fill="#151515" textLength="58.2" lengthAdjust="spacingAndGlyphs" >Network Service</text>
<text x="1163.9" y="463.44" font-size="8.6" fill="#151515" text-anchor="end" >4</text>
<text x="1176" y="463.44" font-size="8.6" fill="#151515" textLength="4.45" lengthAdjust="spacingAndGlyphs" >0</text>
<path d="M932 472.48l3.8 2.85-3.8 2.85z" fill="#9a9a9a"/>
<path d="M940 471.68h3.4l0.8 1h5.6v5.9h-9.8z" fill="#a6a6a6"/>
<text x="952.8" y="478.18" font-size="8.6" fill="#151515" textLength="56.0" lengthAdjust="spacingAndGlyphs" >Printing Service</text>
<text x="1163.9" y="478.18" font-size="8.6" fill="#151515" text-anchor="end" >1</text>
<text x="1176" y="478.18" font-size="8.6" fill="#151515" textLength="4.45" lengthAdjust="spacingAndGlyphs" >0</text>
<path d="M932 487.22l3.8 2.85-3.8 2.85z" fill="#9a9a9a"/>
<path d="M940 486.42h3.4l0.8 1h5.6v5.9h-9.8z" fill="#a6a6a6"/>
<text x="952.8" y="492.92" font-size="8.6" fill="#151515" textLength="47.1" lengthAdjust="spacingAndGlyphs" >Service Desk</text>
<text x="1042" y="492.92" font-size="8.6" fill="#151515" >9</text>
<text x="1298" y="492.92" font-size="8.6" fill="#b0464c" text-anchor="end" textLength="28.91" lengthAdjust="spacingAndGlyphs" >161,998</text>
</svg>
</body></html>
